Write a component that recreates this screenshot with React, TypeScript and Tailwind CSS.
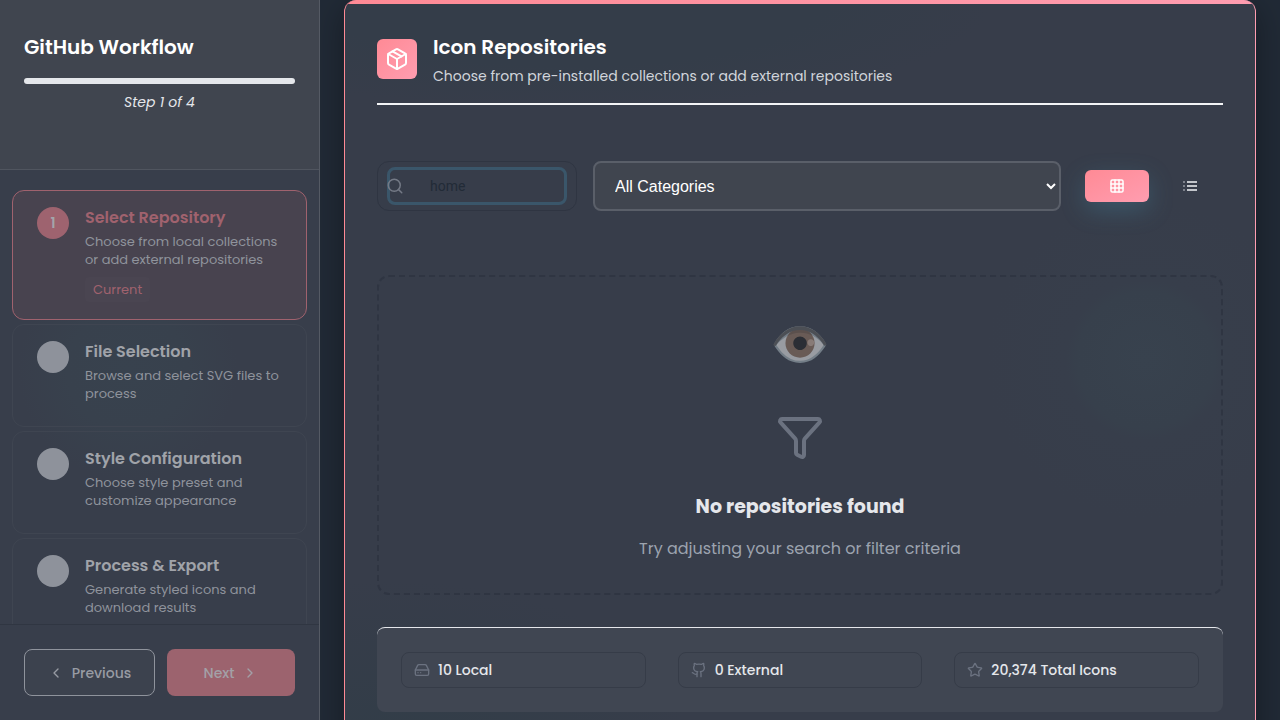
import { ChevronLeft, ChevronRight, Filter, Github, Grid3x3, HardDrive, Package, Search, Star } from "lucide-react";

const steps = [
  { title: "Select Repository", text: "Choose from local collections or add external repositories", current: true },
  { title: "File Selection", text: "Browse and select SVG files to process", current: false },
  { title: "Style Configuration", text: "Choose style preset and customize appearance", current: false },
  { title: "Process & Export", text: "Generate styled icons and download results", current: false },
];

const stats = [
  { icon: HardDrive, label: "10 Local" },
  { icon: Github, label: "0 External" },
  { icon: Star, label: "20,374 Total Icons" },
];

function ListIcon() {
  return (
    <svg width="16" height="16" viewBox="0 0 24 24" fill="none" stroke="currentColor" strokeWidth="3" aria-hidden="true">
      <path d="M7.5 6h15M7.5 12h15M7.5 18h15" />
      <path d="M1.5 6h3M1.5 12h3M1.5 18h3" opacity="0.5" />
    </svg>
  );
}

function Sidebar() {
  return (
    <aside className="flex w-80 shrink-0 flex-col border-r border-[#555a64] bg-[#383e4b] bg-[radial-gradient(circle_at_40%_370px,#38424e_0,#38414d_60px,transparent_110px)]">
      <header className="h-[170px] shrink-0 border-b border-[#50555f] bg-[#40454f] px-6 pt-8">
        <h1 className="text-xl leading-[30px] font-semibold text-white">GitHub Workflow</h1>
        <div
          role="progressbar"
          aria-label="Workflow progress"
          aria-valuenow={1}
          aria-valuemax={4}
          className="mt-4 h-1.5 rounded-full bg-[#e5e7eb]"
        />
        <p className="mt-2 text-center text-sm italic text-[#e5e7eb]">Step 1 of 4</p>
      </header>
      <nav className="min-h-0 flex-1 overflow-hidden px-3 pt-5" aria-label="Steps">
        <ol className="flex flex-col gap-1">
          {steps.map((step) => (
            <li
              key={step.title}
              className={
                step.current
                  ? "flex h-[130px] gap-4 rounded-xl border border-[#a0626e] bg-[#48434f] px-6 pt-4"
                  : "flex h-[103px] gap-4 rounded-xl border border-[#3f4551] px-6 pt-4"
              }
            >
              <span
                className={
                  step.current
                    ? "flex size-8 shrink-0 items-center justify-center rounded-full bg-[#9e636f] text-sm font-semibold text-[#a3a5ab]"
                    : "size-8 shrink-0 rounded-full bg-[#8e929b]"
                }
              >
                {step.current ? "1" : null}
              </span>
              <div className="min-w-0">
                <h2
                  className={
                    step.current
                      ? "text-base leading-[22px] font-semibold text-[#a0626e]"
                      : "text-base leading-[22px] font-semibold text-[#a0a3a9]"
                  }
                >
                  {step.title}
                </h2>
                <p className="mt-1 text-[13px] leading-[18px] text-[#8f939c]">{step.text}</p>
                {step.current && (
                  <span className="mt-2 inline-block rounded bg-[#4a4551] px-2 text-[13px] leading-[25px] text-[#a0626e]">
                    Current
                  </span>
                )}
              </div>
            </li>
          ))}
        </ol>
      </nav>
      <footer className="flex shrink-0 gap-3 border-t border-[#303642] px-6 py-6">
        <button
          type="button"
          disabled
          className="flex h-[47px] w-[131px] shrink-0 items-center justify-center gap-2 rounded-lg border border-[#8f939c] bg-[#3c424e] text-sm font-medium text-[#989ba3]"
        >
          <ChevronLeft size={16} />
          Previous
        </button>
        <button
          type="button"
          disabled
          className="flex h-[47px] flex-1 items-center justify-center gap-2 rounded-lg bg-[#9c636e] text-sm font-medium text-[#a3a0a7]"
        >
          Next
          <ChevronRight size={16} />
        </button>
      </footer>
    </aside>
  );
}

export default function App() {
  return (
    <div className="flex h-screen overflow-hidden bg-[#212a36] font-[Poppins,Inter,sans-serif]">
      <Sidebar />
      <main className="min-w-0 flex-1 overflow-hidden px-6">
        <section className="min-h-[110vh] overflow-hidden rounded-xl border-x border-b border-r-[#ff9db0] border-b-[#ff9db0] border-l-[#ff8a95] bg-[#373d4a] bg-[radial-gradient(circle_at_88%_360px,#38424e_0,#37404c_68px,#373e4b_80px,transparent_160px),radial-gradient(ellipse_420px_110px_at_25%_0,#343d49_0,#343d49_60%,transparent_100%),radial-gradient(ellipse_300px_160px_at_5%_740px,#323d48_0,transparent_100%)] shadow-[0_8px_32px_rgba(0,0,0,0.35)]">
          <div className="h-1 bg-linear-to-r from-[#ff8a95] to-[#ff9db0]" />
          <div className="px-8 pt-7">
            <header className="flex items-center gap-4 border-b-2 border-[#f3f4f6] pb-[17px]">
              <span className="flex size-10 items-center justify-center rounded-md bg-linear-to-br from-[#ff8a95] to-[#ff9db0] text-white">
                <Package size={24} />
              </span>
              <div>
                <h2 className="text-xl leading-[30px] font-semibold text-white">Icon Repositories</h2>
                <p className="mt-1 text-sm leading-5 text-[#d1d5db]">
                  Choose from pre-installed collections or add external repositories
                </p>
              </div>
            </header>

            <div className="mt-14 flex items-center gap-4">
              <label className="relative flex h-[50px] w-[200px] items-center rounded-xl border border-[#2f3542] px-[9px]">
                <Search size={18} className="absolute left-2 text-[#747a86]" />
                <input
                  type="text"
                  aria-label="Search repositories"
                  defaultValue="home"
                  className="h-[38px] w-full rounded-lg border-3 border-[#3a566a] bg-transparent pl-10 font-[Roboto,sans-serif] text-sm text-[#222b37] outline-none"
                />
              </label>
              <select
                aria-label="Category"
                className="h-[50px] min-w-0 flex-1 rounded-lg border-2 border-[#5a5f69] bg-[#40454f] px-4 font-['Liberation_Sans',sans-serif] text-base text-white"
              >
                <option>All Categories</option>
              </select>
              <div className="flex gap-[9px] pr-px pl-2">
                <button
                  type="button"
                  aria-label="Grid view"
                  className="flex h-8 w-16 items-center justify-center rounded-md bg-linear-to-br from-[#ff8a95] to-[#ff9db0] text-white shadow-[0_8px_24px_rgba(72,150,180,0.3)]"
                >
                  <Grid3x3 size={16} strokeWidth={2.25} />
                </button>
                <button
                  type="button"
                  aria-label="List view"
                  className="flex h-8 w-16 items-center justify-center rounded-md text-[#c3c6cb]"
                >
                  <ListIcon />
                </button>
              </div>
            </div>

            <div className="mt-16 flex h-80 flex-col items-center rounded-xl border-2 border-dashed border-[#2f3542] pt-8 text-center">
              <span className="text-5xl leading-[72px] opacity-50">👁️</span>
              <Filter size={48} className="mt-8 text-[#6b7280]" />
              <h3 className="mt-8 text-[19px] leading-7 font-bold text-[#e5e7eb]">No repositories found</h3>
              <p className="mt-4 text-base text-[#9ca3af]">Try adjusting your search or filter criteria</p>
            </div>

            <ul className="mt-8 grid grid-cols-3 gap-8 rounded-lg border-t border-[#e5e7eb] bg-[#404652] p-6">
              {stats.map(({ icon: Icon, label }) => (
                <li
                  key={label}
                  className="flex h-9 items-center gap-2 rounded-lg border border-[#363c48] px-3 text-sm font-medium text-[#e5e7eb]"
                >
                  <Icon size={16} className="text-[#6b7280]" />
                  {label}
                </li>
              ))}
            </ul>
          </div>
        </section>
      </main>
    </div>
  );
}
